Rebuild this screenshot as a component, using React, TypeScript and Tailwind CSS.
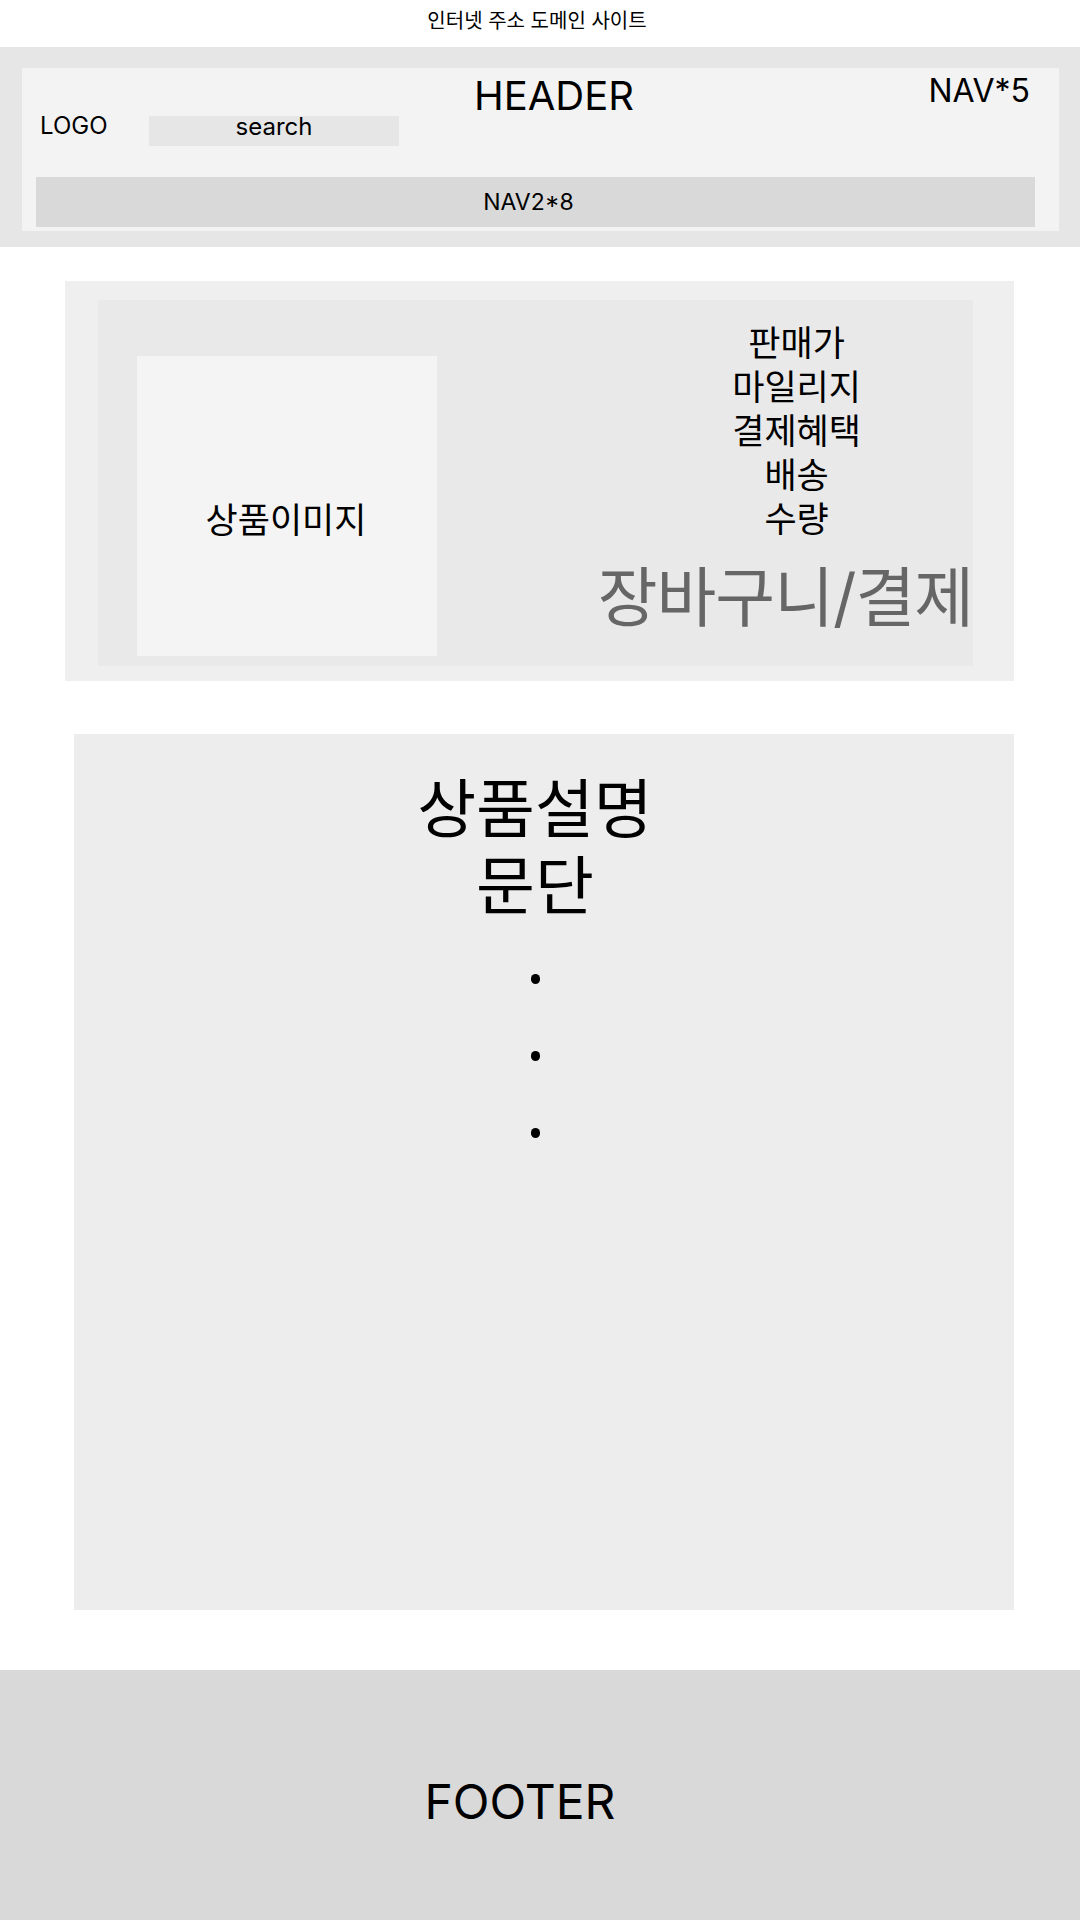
import React from "react";

const font = { fontFamily: "Inter, 'Noto Sans CJK KR', sans-serif" };

export default function App() {
  return (
    <div className="w-[1080px] min-h-[1920px] bg-white text-black flex flex-col" style={font}>
      {/* top title */}
      <div className="h-[47px] flex items-start justify-center pt-[9px] pr-[6px] text-[20px] leading-[24px]">
        인터넷 주소 도메인 사이트
      </div>

      {/* header */}
      <header className="bg-[#e6e6e6] pt-[21px] pb-[16px] pl-[22px] pr-[21px]">
        <div className="bg-[#f3f3f3] h-[163px] flex flex-col">
          <div className="h-[109px] flex items-start pl-[18px] pr-[29px]">
            <div className="w-[109px] mt-[46px] text-[24px] leading-none">LOGO</div>
            <div className="mt-[48px] w-[250px] h-[30px] bg-[#e6e6e6] flex items-start justify-center text-[24px] leading-none">
              <span className="-mt-[1px]">search</span>
            </div>
            <div className="mt-[8px] ml-[75px] text-[40px] leading-none">HEADER</div>
            <div className="mt-[7px] ml-auto text-[32px] leading-none">NAV*5</div>
          </div>
          <div className="ml-[14px] mr-[24px] h-[50px] bg-[#d9d9d9] flex items-center justify-center pr-[14px] text-[23px] leading-none">
            NAV2*8
          </div>
        </div>
      </header>

      {/* product */}
      <section className="mt-[34px] ml-[65px] w-[949px] h-[400px] bg-[#efefef] pt-[19px] pb-[15px] pl-[33px] pr-[41px]">
        <div className="h-full bg-[#e9e9e9] flex">
          <div className="ml-[39px] mt-[56px] w-[300px] h-[300px] bg-[#f4f4f4] flex items-center justify-center pt-[28px] pr-[2px] text-[35px] leading-none">
            상품이미지
          </div>
          <div className="flex-1 flex flex-col items-end">
            <ul className="mt-[21px] mr-[112px] flex flex-col items-center text-[35px] leading-[44px]">
              <li>판매가</li>
              <li>마일리지</li>
              <li>결제혜택</li>
              <li>배송</li>
              <li>수량</li>
            </ul>
            <div className="mt-[24px] text-[#666666] text-[65px] leading-none tracking-[-1px]">장바구니/결제</div>
          </div>
        </div>
      </section>

      {/* description */}
      <section className="mt-[53px] ml-[74px] w-[940px] h-[876px] bg-[#ededed] flex flex-col items-center pt-[36px]">
        <div className="text-[64px] leading-[77px] text-center mr-[18px]">
          <div>상품설명</div>
          <div>문단</div>
        </div>
        <ul className="mt-[16px] flex flex-col items-center mr-[18px]">
          {[0, 1, 2].map((i) => (
            <li key={i} className="h-[77px] flex items-center justify-center">
              <span className="block w-[9px] h-[10px] rounded-full bg-black" />
            </li>
          ))}
        </ul>
      </section>

      {/* footer */}
      <footer className="mt-[60px] h-[250px] bg-[#d9d9d9] flex items-center justify-center pt-[14px] pr-[40px] text-[48px] leading-none">
        FOOTER
      </footer>
    </div>
  );
}
